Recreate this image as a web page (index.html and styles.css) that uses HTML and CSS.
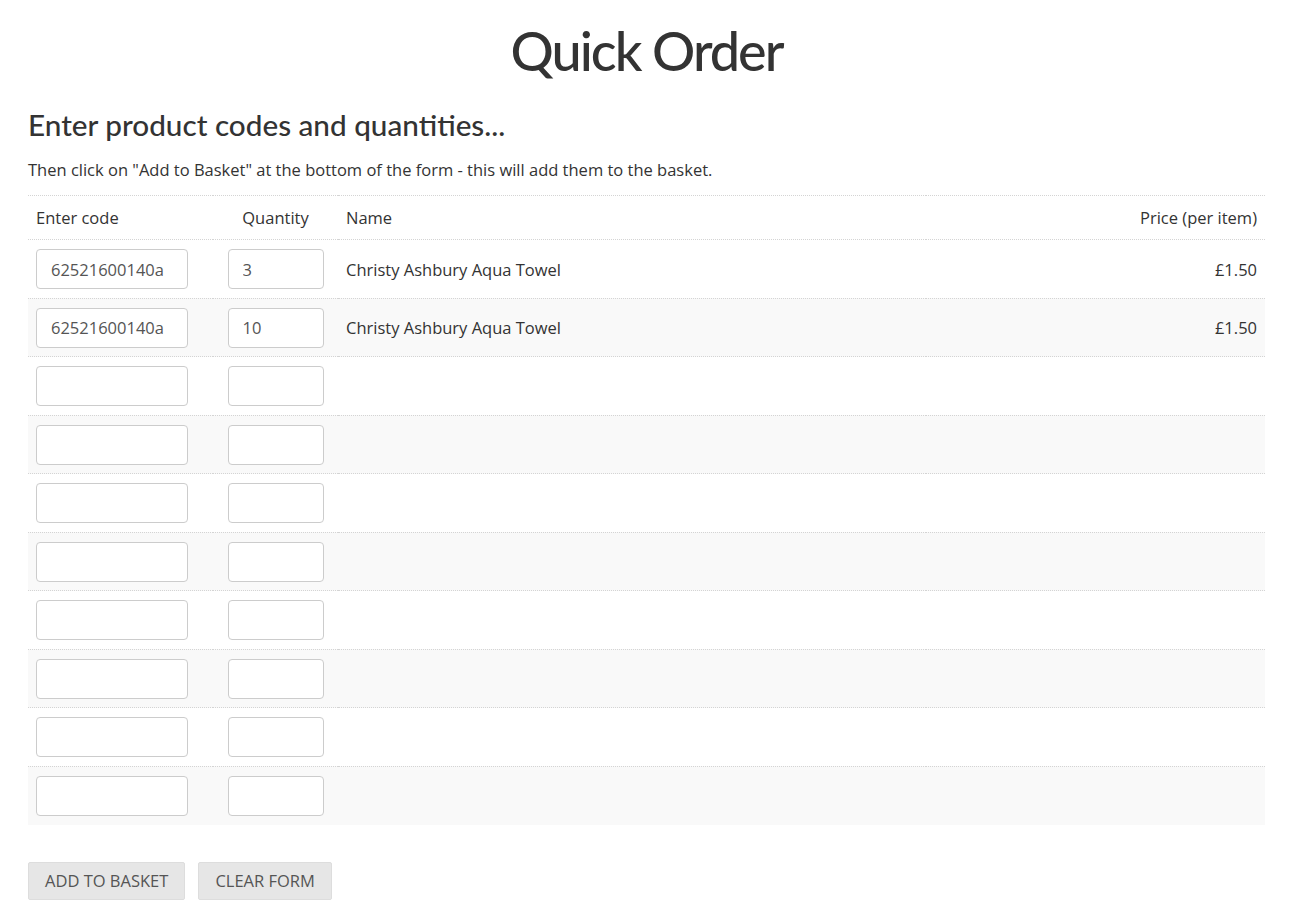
FILE: index.html
```html
<!DOCTYPE html>
<html lang="en">
<head>
<meta charset="utf-8">
<title>Quick Order</title>
<link rel="stylesheet" href="styles.css">
</head>
<body>
<div class="page">
  <h1 class="title">Quick Order</h1>
  <h2 class="subtitle">Enter product codes and quantities...</h2>
  <p class="intro">Then click on "Add to Basket" at the bottom of the form - this will add them to the basket.</p>
  <table class="order">
    <thead>
      <tr>
        <th class="c-code">Enter code</th>
        <th class="c-qty">Quantity</th>
        <th class="c-name">Name</th>
        <th class="c-price">Price (per item)</th>
      </tr>
    </thead>
    <tbody>
      <tr><td class="c-code"><input class="in-code" value="62521600140a"></td><td class="c-qty"><input class="in-qty" value="3"></td><td class="c-name">Christy Ashbury Aqua Towel</td><td class="c-price">£1.50</td></tr>
      <tr><td class="c-code"><input class="in-code" value="62521600140a"></td><td class="c-qty"><input class="in-qty" value="10"></td><td class="c-name">Christy Ashbury Aqua Towel</td><td class="c-price">£1.50</td></tr>
      <tr><td class="c-code"><input class="in-code"></td><td class="c-qty"><input class="in-qty"></td><td class="c-name"></td><td class="c-price"></td></tr>
      <tr><td class="c-code"><input class="in-code"></td><td class="c-qty"><input class="in-qty"></td><td class="c-name"></td><td class="c-price"></td></tr>
      <tr><td class="c-code"><input class="in-code"></td><td class="c-qty"><input class="in-qty"></td><td class="c-name"></td><td class="c-price"></td></tr>
      <tr><td class="c-code"><input class="in-code"></td><td class="c-qty"><input class="in-qty"></td><td class="c-name"></td><td class="c-price"></td></tr>
      <tr><td class="c-code"><input class="in-code"></td><td class="c-qty"><input class="in-qty"></td><td class="c-name"></td><td class="c-price"></td></tr>
      <tr><td class="c-code"><input class="in-code"></td><td class="c-qty"><input class="in-qty"></td><td class="c-name"></td><td class="c-price"></td></tr>
      <tr><td class="c-code"><input class="in-code"></td><td class="c-qty"><input class="in-qty"></td><td class="c-name"></td><td class="c-price"></td></tr>
      <tr><td class="c-code"><input class="in-code"></td><td class="c-qty"><input class="in-qty"></td><td class="c-name"></td><td class="c-price"></td></tr>
    </tbody>
  </table>
  <div class="actions">
    <button class="btn">Add to Basket</button>
    <button class="btn">Clear Form</button>
  </div>
</div>
</body>
</html>
```
FILE: styles.css
```css
html, body {
  margin: 0;
  padding: 0;
  background: #fff;
}
body {
  font-family: "Open Sans", "Liberation Sans", sans-serif;
  font-size: 16.5px;
  color: #333;
}
.page {
  padding: 0 39px 0 28px;
}
.title {
  font-family: Lato, "Noto Sans", sans-serif;
  font-weight: 500;
  font-size: 54px;
  letter-spacing: -2px;
  line-height: 1;
  text-align: center;
  margin: 0;
  padding-top: 24px;
  height: 58px;
  color: #333;
}
.subtitle {
  font-family: Lato, "Noto Sans", sans-serif;
  font-weight: 500;
  font-size: 29.7px;
  line-height: 32px;
  margin: 27px 0 0 0;
  color: #333;
}
.intro {
  margin: 17px 0 0 0;
  line-height: 24px;
}
.order {
  width: 100%;
  border-collapse: collapse;
  margin-top: 13px;
  border-top: 1px dotted #d4d4d4;
}
.order th {
  font-weight: 400;
  height: 43px;
  padding: 0 8px;
  text-align: left;
  vertical-align: middle;
  border-bottom: 1px dotted #d4d4d4;
}
.order td {
  height: 40px;
  padding: 9px 8px 8.5px;
  vertical-align: middle;
  border-bottom: 1px dotted #d4d4d4;
}
.order tbody tr:nth-child(even) td {
  background: #f9f9f9;
}
.order tbody tr:last-child td {
  border-bottom: none;
  padding-bottom: 9px;
}
.order .c-code {
  width: 169px;
}
.order .c-qty {
  width: 109px;
  text-align: center;
}
.order .c-price {
  text-align: right;
}
.in-code, .in-qty {
  box-sizing: border-box;
  height: 40px;
  border: 1px solid #ccc;
  border-radius: 4px;
  background: #fff;
  font-family: "Open Sans", "Liberation Sans", sans-serif;
  font-size: 16.5px;
  color: #555;
  padding: 0 14px;
  margin: 0;
  display: block;
}
.in-code {
  width: 152px;
}
.in-qty {
  width: 96px;
  margin: 0 auto;
}
.actions {
  display: flex;
  gap: 13px;
  margin-top: 37px;
}
.btn {
  font-family: "Open Sans", "Liberation Sans", sans-serif;
  font-size: 16.5px;
  text-transform: uppercase;
  color: #555;
  background: #e6e6e6;
  border: 1px solid #ddd;
  border-radius: 2px;
  height: 38px;
  padding: 0 16px;
  cursor: pointer;
}
```
